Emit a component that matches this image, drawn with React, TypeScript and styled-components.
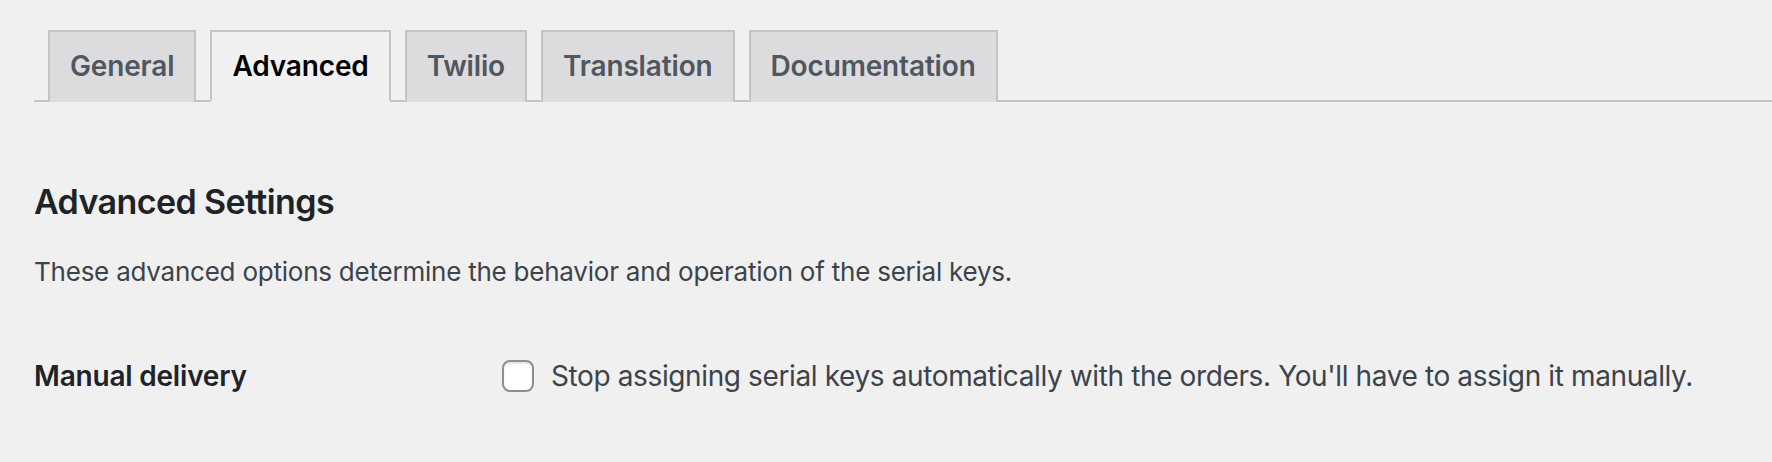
import React from 'react'
import styled, { createGlobalStyle } from 'styled-components'

const GlobalStyle = createGlobalStyle`
  html, body {
    margin: 0;
    padding: 0;
    background: #f0f0f1;
  }
  body {
    font-family: Inter, "Noto Sans", "Liberation Sans", sans-serif;
    color: #3c434a;
  }
`;

const Page = styled.div`
  width: 1772px;
  height: 462px;
  padding: 30px 0 0 34px;
  box-sizing: border-box;
  overflow: hidden;
`;

const TabBar = styled.nav`
  display: flex;
  gap: 14px;
  padding-left: 14px;
  border-bottom: 2px solid #c3c4c7;
`;

const Tab = styled.a<{ $active?: boolean }>`
  display: block;
  padding: 10px 20px;
  margin-bottom: -2px;
  font-size: 28px;
  line-height: 48px;
  font-weight: 600;
  letter-spacing: -0.15px;
  text-decoration: none;
  border: 2px solid #c3c4c7;
  border-bottom: ${p => (p.$active ? '2px solid #f0f0f1' : 'none')};
  background: ${p => (p.$active ? '#f0f0f1' : '#dcdcde')};
  color: ${p => (p.$active ? '#000' : '#50575e')};
  cursor: pointer;
`;

const Heading = styled.h2`
  margin: 78px 0 0;
  font-size: 34px;
  line-height: 44px;
  font-weight: 600;
  letter-spacing: -0.6px;
  color: #1d2327;
`;

const Desc = styled.p`
  margin: 28px 0 0;
  font-size: 26px;
  line-height: 40px;
  letter-spacing: -0.23px;
  color: #3c434a;
`;

const Row = styled.div`
  display: grid;
  grid-template-columns: 468px 1fr;
  align-items: center;
  margin-top: 64px;
`;

const Label = styled.div`
  font-size: 28px;
  line-height: 40px;
  font-weight: 600;
  letter-spacing: -0.2px;
  color: #1d2327;
`;

const CheckLabel = styled.label`
  display: flex;
  align-items: center;
  gap: 17px;
  font-size: 28px;
  line-height: 40px;
  letter-spacing: -0.38px;
  color: #3c434a;
`;

const Box = styled.input`
  appearance: none;
  margin: 0;
  flex-shrink: 0;
  width: 32px;
  height: 32px;
  border: 2px solid #8c8f94;
  border-radius: 8px;
  background: #fff;
  box-shadow: inset 0 2px 2px rgba(0, 0, 0, 0.1);
  box-sizing: border-box;
`;

const tabs = ['General', 'Advanced', 'Twilio', 'Translation', 'Documentation'];

export default function App() {
  return (
    <>
      <GlobalStyle />
      <Page>
        <TabBar>
          {tabs.map(t => (
            <Tab key={t} $active={t === 'Advanced'}>{t}</Tab>
          ))}
        </TabBar>
        <Heading>Advanced Settings</Heading>
        <Desc>These advanced options determine the behavior and operation of the serial keys.</Desc>
        <Row>
          <Label>Manual delivery</Label>
          <CheckLabel>
            <Box type="checkbox" />
            Stop assigning serial keys automatically with the orders. You'll have to assign it manually.
          </CheckLabel>
        </Row>
      </Page>
    </>
  )
}
